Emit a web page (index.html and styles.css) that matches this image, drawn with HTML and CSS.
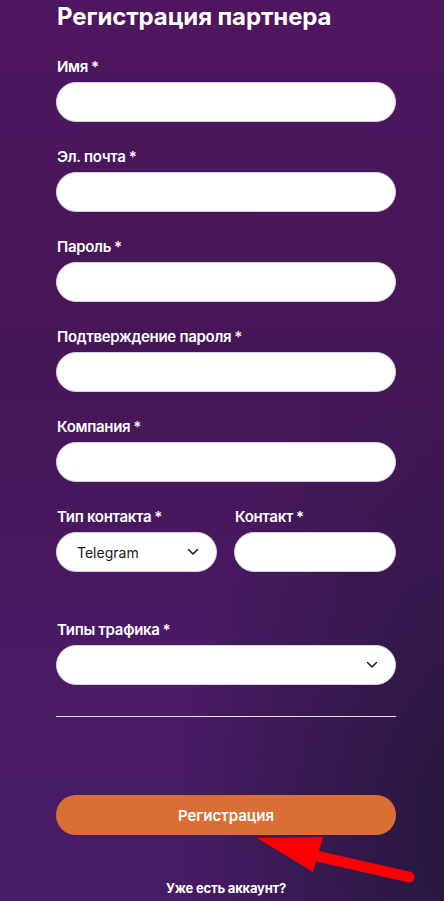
FILE: index.html
```html
<!DOCTYPE html>
<html lang="ru">
<head>
<meta charset="utf-8">
<link rel="stylesheet" href="styles.css">
</head>
<body>
<div class="page">
  <form class="form">
    <h1 class="title">Регистрация партнера</h1>
    <div class="field">
      <label class="label">Имя<span class="req">*</span></label>
      <div class="input"></div>
    </div>
    <div class="field">
      <label class="label">Эл. почта<span class="req">*</span></label>
      <div class="input"></div>
    </div>
    <div class="field">
      <label class="label">Пароль<span class="req">*</span></label>
      <div class="input"></div>
    </div>
    <div class="field">
      <label class="label">Подтверждение пароля<span class="req">*</span></label>
      <div class="input"></div>
    </div>
    <div class="field">
      <label class="label">Компания<span class="req">*</span></label>
      <div class="input"></div>
    </div>
    <div class="row">
      <div class="field col-left">
        <label class="label">Тип контакта<span class="req">*</span></label>
        <div class="input select">
          <span class="value">Telegram</span>
          <svg class="chev" width="12" height="8" viewBox="0 0 12 8"><path d="M1.5 1.5 L6 6 L10.5 1.5" fill="none" stroke="#222" stroke-width="1.6" stroke-linecap="round" stroke-linejoin="round"/></svg>
        </div>
      </div>
      <div class="field col-right">
        <label class="label">Контакт<span class="req">*</span></label>
        <div class="input"></div>
      </div>
    </div>
    <div class="field traffic">
      <label class="label">Типы трафика<span class="req">*</span></label>
      <div class="input select">
        <span class="value"></span>
        <svg class="chev" width="12" height="8" viewBox="0 0 12 8"><path d="M1.5 1.5 L6 6 L10.5 1.5" fill="none" stroke="#222" stroke-width="1.6" stroke-linecap="round" stroke-linejoin="round"/></svg>
      </div>
    </div>
    <div class="divider"></div>
    <button type="button" class="submit">Регистрация</button>
    <div class="login">Уже есть аккаунт?</div>
  </form>
  <svg class="arrow" width="444" height="901" viewBox="0 0 444 901">
    <polygon points="257,838 323,837 313,872" fill="#ff0000"/>
    <line x1="312" y1="855" x2="409" y2="877" stroke="#ff0000" stroke-width="11" stroke-linecap="round"/>
  </svg>
</div>
</body>
</html>
```

FILE: styles.css
```css
* { box-sizing: border-box; }
html, body {
  margin: 0;
  padding: 0;
  width: 444px;
  height: 901px;
  overflow: hidden;
}
body {
  font-family: Inter, "Noto Sans", sans-serif;
  color: #fff;
  background:
    radial-gradient(ellipse 420px 700px at 470px 820px, rgba(30, 22, 50, 0.85), rgba(30, 22, 50, 0) 70%),
    linear-gradient(180deg, #4e1660 0%, #451656 40%, #4a1a66 75%, #461c66 100%);
}
.page {
  position: relative;
  width: 444px;
  height: 901px;
}
.form {
  display: flex;
  flex-direction: column;
  padding: 0 48px 0 56px;
}
.title {
  margin: 2px 0 25px 1px;
  font-size: 24px;
  line-height: 30px;
  font-weight: 700;
  letter-spacing: -0.1px;
}
.field {
  display: flex;
  flex-direction: column;
  margin-bottom: 25px;
}
.label {
  font-size: 15px;
  line-height: 20px;
  font-weight: 600;
  margin-bottom: 5px;
  padding-left: 1px;
  letter-spacing: -0.3px;
}
.req { margin-left: 3px; }
.input {
  height: 40px;
  background: #fff;
  border-radius: 20px;
  border: 1px solid #d9cde6;
}
.select {
  display: flex;
  align-items: center;
  justify-content: space-between;
  padding: 0 17px 0 20px;
}
.value {
  color: #1a1a1a;
  font-size: 14px;
  font-weight: 400;
}
.chev { display: block; }
.row {
  display: flex;
  gap: 17px;
}
.col-left { width: 161px; }
.col-right { flex: 1; }
.row .field { margin-bottom: 48px; }
.traffic { margin-bottom: 31px; }
.divider {
  height: 1px;
  background: #e8dcef;
  margin-bottom: 78px;
}
.submit {
  height: 40px;
  border: none;
  border-radius: 20px;
  background: #d96f35;
  color: #fff;
  font-family: Inter, "Noto Sans", sans-serif;
  font-size: 15px;
  font-weight: 600;
  padding: 0;
  margin: 0 0 45px 0;
}
.login {
  text-align: center;
  font-size: 13px;
  font-weight: 700;
  line-height: 16px;
  letter-spacing: -0.2px;
}
.arrow {
  position: absolute;
  left: 0;
  top: 0;
  pointer-events: none;
}
```
